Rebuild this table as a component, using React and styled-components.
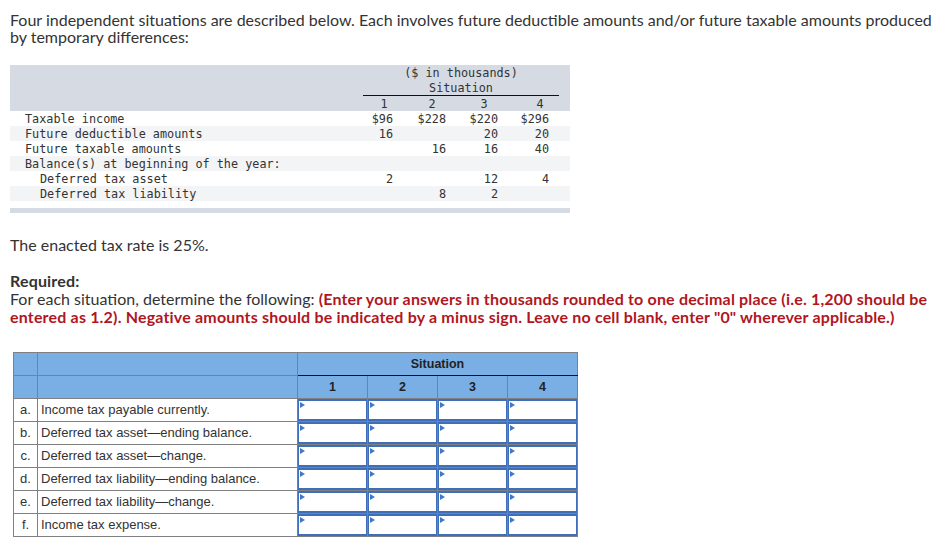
import React from 'react';
import styled, { createGlobalStyle } from 'styled-components';

const GlobalStyle = createGlobalStyle`
    html, body {
        margin: 0;
        padding: 0;
        background: #fff;
    }
    body {
        font-family: Lato, "Open Sans", sans-serif;
        color: #333;
    }
`;

const Page = styled.div`
    padding: 11px 0 10px 10px;
`;

const Prose = styled.p`
    margin: ${props => props.mt || 0}px 0 0;
    font-size: 16px;
    line-height: ${props => props.lh || 17.5}px;
`;

const Strong = styled.span`
    font-weight: 700;
    letter-spacing: 0.18px;
`;

const Red = styled.span`
    font-weight: 700;
    letter-spacing: 0.18px;
    color: #b1161e;
`;

const DataPanel = styled.div`
    width: 560px;
    margin-top: 20px;
    padding-bottom: 7px;
    border-bottom: 5px solid #d6dae3;
`;

const DataTable = styled.table`
    border-collapse: collapse;
    table-layout: fixed;
    width: 560px;
    font-family: "DejaVu Sans Mono", "Liberation Mono", monospace;
    font-size: 11.8px;
    color: #333;

    & td, & th {
        padding: 2px 0 0;
        height: 13px;
        line-height: 13px;
        font-weight: 400;
        white-space: pre;
    }
`;

const HeadRow = styled.tr`
    background: #d6dae3;
`;

const HeadCell = styled.th`
    text-align: ${props => (props.center ? 'center' : 'right')};
    padding-right: ${props => props.pad || 0}px !important;
    border-bottom: ${props => (props.underline ? '1px solid #111' : 'none')};
`;

const DataRow = styled.tr`
    background: ${props => (props.shade ? '#f3f4f6' : '#fff')};
`;

const LabelCell = styled.td`
    padding-left: ${props => (props.indent ? 30 : 15)}px !important;
`;

const NumCell = styled.td`
    text-align: right;
    padding-right: ${props => props.pad || 7}px !important;
`;

const AnswerTable = styled.table`
    margin: 26px 0 0 3px;
    border-collapse: collapse;
    table-layout: fixed;
    width: 564px;
    font-family: "Liberation Sans", Arial, sans-serif;
    font-size: 13px;
    color: #333;

    & td, & th {
        border: 1px solid #808080;
        padding: 0;
        height: 22px;
    }
`;

const BlueHead = styled.th`
    background: #7aafe5;
    font-weight: 700;
    font-size: 12.5px;
    text-align: center;
    color: #222;
    border-bottom-color: ${props => (props.underline ? '#111' : '#808080')} !important;
`;

const LetterCell = styled.td`
    text-align: center;
`;

const TextCell = styled.td`
    padding-left: 3px !important;
`;

const AnswerBox = styled.div`
    position: relative;
    height: 22px;
    box-sizing: border-box;
    border: 1px solid #3f6fb8;
    border-top-width: 2px;
    border-bottom-width: 2px;
    background: #fff;

    &::before {
        content: '';
        position: absolute;
        left: 1px;
        top: 1px;
        border-left: 5px solid #3f78c8;
        border-top: 3.5px solid transparent;
        border-bottom: 3.5px solid transparent;
    }
`;

const dataRows = [
    { label: 'Taxable income', values: ['$96', '$228', '$220', '$296'] },
    { label: 'Future deductible amounts', values: ['16', '', '20', '20'] },
    { label: 'Future taxable amounts', values: ['', '16', '16', '40'] },
    { label: 'Balance(s) at beginning of the year:', values: ['', '', '', ''] },
    { label: 'Deferred tax asset', values: ['2', '', '12', '4'], indent: true },
    { label: 'Deferred tax liability', values: ['', '8', '2', ''], indent: true },
];

const headPads = [12.5, 17.5, 17.5, 15.5];
const numPads = [7, 7, 7, 10];

const answerRows = [
    ['a.', 'Income tax payable currently.'],
    ['b.', 'Deferred tax asset\u2014ending balance.'],
    ['c.', 'Deferred tax asset\u2014change.'],
    ['d.', 'Deferred tax liability\u2014ending balance.'],
    ['e.', 'Deferred tax liability\u2014change.'],
    ['f.', 'Income tax expense.'],
];

const App = () => {
    return (
        <>
            <GlobalStyle />
            <Page>
                <Prose lh={17}>
                    Four independent situations are described below. Each involves future deductible amounts and/or
                    future taxable amounts produced by temporary differences:
                </Prose>

                <DataPanel>
                    <DataTable>
                        <colgroup>
                            <col style={{ width: 353 }} />
                            <col style={{ width: 37 }} />
                            <col style={{ width: 53 }} />
                            <col style={{ width: 52 }} />
                            <col style={{ width: 54 }} />
                            <col style={{ width: 11 }} />
                        </colgroup>
                        <thead>
                            <HeadRow>
                                <HeadCell rowSpan={3} />
                                <HeadCell colSpan={4} center>
                                    ($ in thousands)
                                </HeadCell>
                                <HeadCell rowSpan={3} />
                            </HeadRow>
                            <HeadRow>
                                <HeadCell colSpan={4} center underline>
                                    Situation
                                </HeadCell>
                            </HeadRow>
                            <HeadRow>
                                {headPads.map((pad, i) => (
                                    <HeadCell key={i} pad={pad}>
                                        {i + 1}
                                    </HeadCell>
                                ))}
                            </HeadRow>
                        </thead>
                        <tbody>
                            {dataRows.map(({ label, values, indent }, r) => (
                                <DataRow key={label} shade={r % 2 === 1}>
                                    <LabelCell indent={indent}>{label}</LabelCell>
                                    {values.map((v, i) => (
                                        <NumCell key={i} pad={numPads[i]}>
                                            {v}
                                        </NumCell>
                                    ))}
                                    <td />
                                </DataRow>
                            ))}
                        </tbody>
                    </DataTable>
                </DataPanel>

                <Prose mt={23}>The enacted tax rate is 25%.</Prose>

                <Prose mt={18} lh={18}>
                    <Strong>Required:</Strong>
                    <br />
                    For each situation, determine the following:{' '}
                    <Red>
                        (Enter your answers in thousands rounded to one decimal place (i.e. 1,200 should be entered as
                        1.2). Negative amounts should be indicated by a minus sign. Leave no cell blank, enter "0"
                        wherever applicable.)
                    </Red>
                </Prose>

                <AnswerTable>
                    <colgroup>
                        <col style={{ width: 24 }} />
                        <col style={{ width: 260 }} />
                        <col style={{ width: 70 }} />
                        <col style={{ width: 70 }} />
                        <col style={{ width: 70 }} />
                        <col style={{ width: 70 }} />
                    </colgroup>
                    <thead>
                        <tr>
                            <BlueHead />
                            <BlueHead />
                            <BlueHead colSpan={4} underline>
                                Situation
                            </BlueHead>
                        </tr>
                        <tr>
                            <BlueHead />
                            <BlueHead />
                            {[1, 2, 3, 4].map(n => (
                                <BlueHead key={n}>{n}</BlueHead>
                            ))}
                        </tr>
                    </thead>
                    <tbody>
                        {answerRows.map(([letter, text]) => (
                            <tr key={letter}>
                                <LetterCell>{letter}</LetterCell>
                                <TextCell>{text}</TextCell>
                                {[1, 2, 3, 4].map(n => (
                                    <td key={n}>
                                        <AnswerBox />
                                    </td>
                                ))}
                            </tr>
                        ))}
                    </tbody>
                </AnswerTable>
            </Page>
        </>
    );
};

export default App;
